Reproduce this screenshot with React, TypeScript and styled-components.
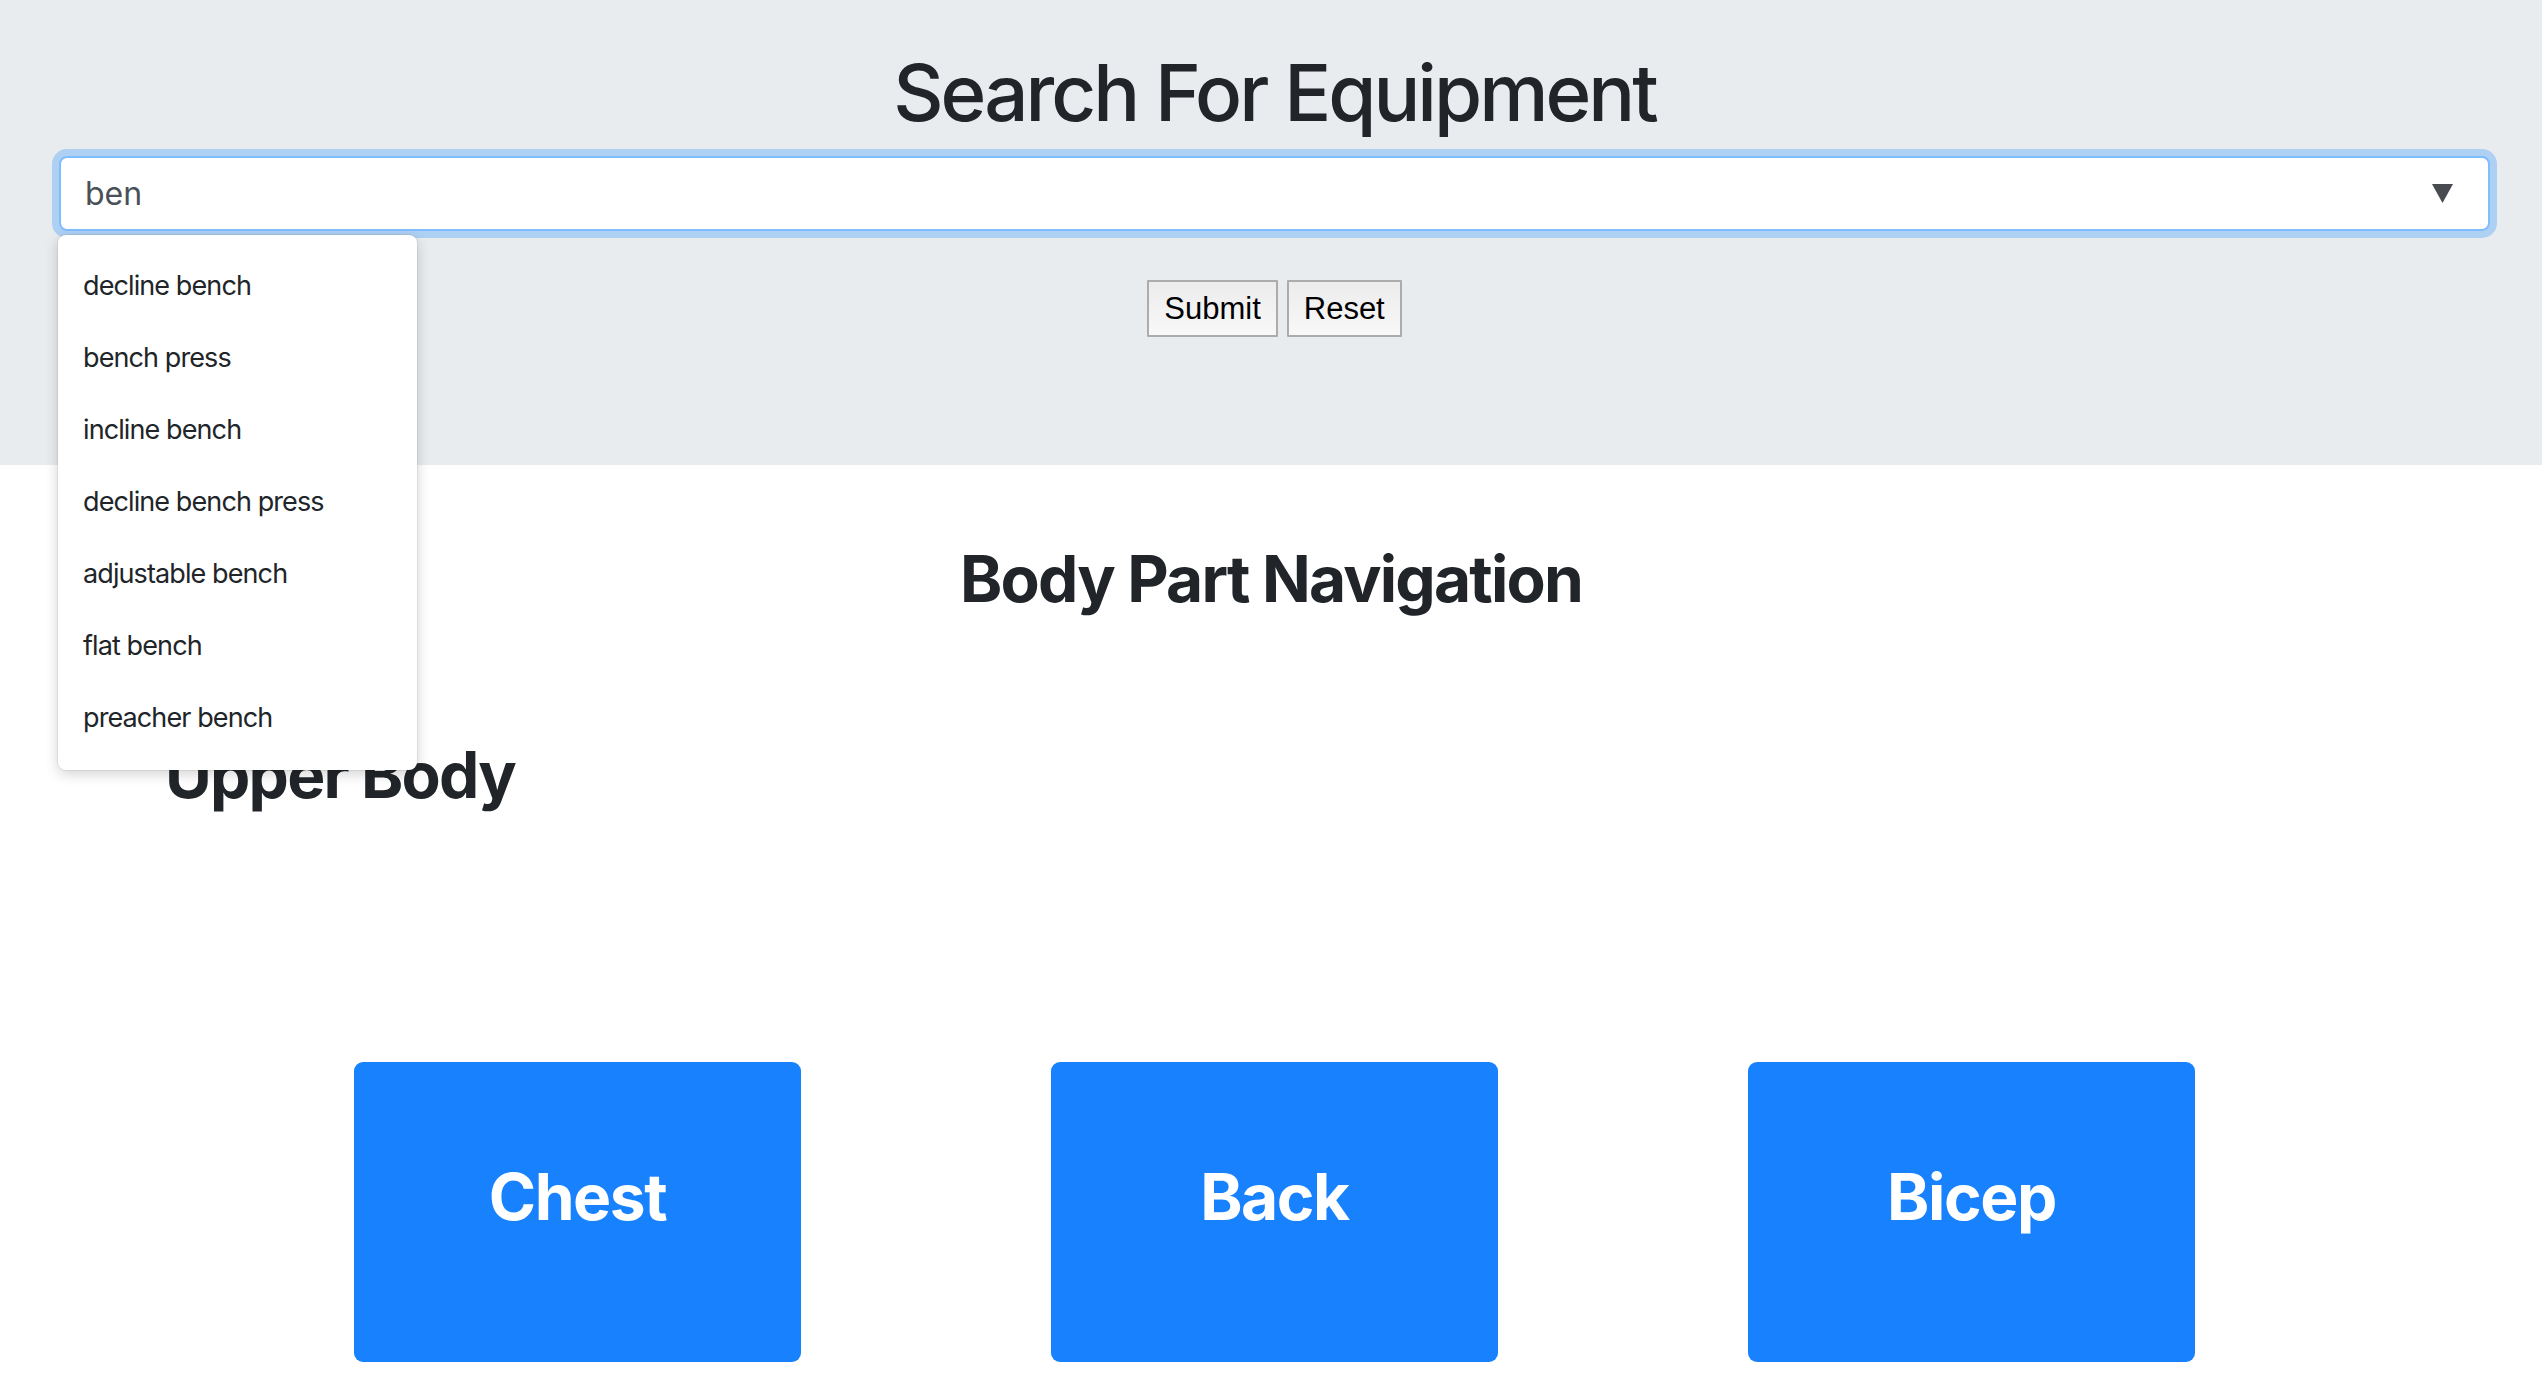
import React from 'react';
import styled, { createGlobalStyle } from 'styled-components';

const GlobalStyle = createGlobalStyle`
  body {
    margin: 0;
    background: #ffffff;
    font-family: Inter, "Noto Sans", "Liberation Sans", sans-serif;
    color: #212529;
  }
`;

// Header area with the search box
const Jumbotron = styled.header`
  background-color: #e9ecef;
  padding: 45px 52px 128px 59px;
`;

const Title = styled.h1`
  margin: 0 0 15px;
  font-size: 78px;
  font-weight: 500;
  line-height: 96px;
  letter-spacing: -3px;
  text-align: center;
  color: #212529;
`;

const SearchWrap = styled.div`
  position: relative;
`;

const SearchInput = styled.input`
  box-sizing: border-box;
  display: block;
  width: 100%;
  height: 75px;
  padding: 0 80px 0 24px;
  border: 2px solid #80bdff;
  border-radius: 8px;
  box-shadow: 0 0 0 7px rgba(0, 123, 255, 0.25);
  outline: none;
  background: #ffffff;
  font-family: inherit;
  font-size: 32px;
  color: #495057;
`;

const Caret = styled.svg`
  position: absolute;
  right: 37px;
  top: 28px;
  width: 21px;
  height: 19px;
`;

const Menu = styled.ul`
  position: absolute;
  top: calc(100% + 4px);
  left: -1px;
  z-index: 10;
  box-sizing: border-box;
  width: 359px;
  margin: 0;
  padding: 15px 0 16px;
  list-style: none;
  background: #ffffff;
  border-radius: 8px;
  box-shadow: 0 0 0 1px rgba(0, 0, 0, 0.06), 0 4px 14px rgba(0, 0, 0, 0.18);
`;

const MenuItem = styled.li`
  height: 72px;
  line-height: 72px;
  padding: 0 25px;
  font-size: 27px;
  letter-spacing: -0.9px;
  color: #212529;
  white-space: nowrap;
`;

const ButtonRow = styled.div`
  display: flex;
  justify-content: center;
  gap: 9px;
  margin-top: 49px;
`;

const FormButton = styled.button<{ $pad: number }>`
  height: 57px;
  padding: 0 ${(p) => p.$pad}px;
  border: 2px solid #acacac;
  border-radius: 1px;
  background: linear-gradient(#ececec, #f8f8f8);
  font-family: "Liberation Sans", Arial, sans-serif;
  font-size: 31px;
  color: #000000;
`;

// Body part section
const Section = styled.main`
  padding: 75px 0 0;
`;

const Heading = styled.h2<{ $align?: string }>`
  margin: 0;
  font-size: 64px;
  font-weight: 700;
  line-height: 77px;
  letter-spacing: -1.8px;
  text-align: ${(p) => p.$align || 'left'};
  color: #212529;
`;

const GroupTitle = styled(Heading)`
  margin-top: 119px;
  padding-left: 165px;
`;

const CardGrid = styled.div`
  display: grid;
  grid-template-columns: repeat(3, 697px);
  justify-content: center;
  padding-left: 7px;
  margin-top: 249px;
`;

const PartCard = styled.a`
  box-sizing: border-box;
  justify-self: center;
  width: 447px;
  height: 300px;
  padding-top: 96px;
  border-radius: 9px;
  background: #1881fe;
  color: #ffffff;
  text-align: center;
  text-decoration: none;
  font-size: 64px;
  font-weight: 700;
  line-height: 77px;
  letter-spacing: -1.4px;
`;

const suggestions = [
  'decline bench',
  'bench press',
  'incline bench',
  'decline bench press',
  'adjustable bench',
  'flat bench',
  'preacher bench',
];

const parts = ['Chest', 'Back', 'Bicep'];

const App = () => {
  return (
    <>
      <GlobalStyle />
      <Jumbotron>
        <Title>Search For Equipment</Title>
        <SearchWrap>
          <SearchInput defaultValue="ben" />
          <Caret viewBox="0 0 21 19">
            <path d="M0 0 H21 L10.5 19 Z" fill="#484b50" />
          </Caret>
          <Menu>
            {suggestions.map((s) => (
              <MenuItem key={s}>{s}</MenuItem>
            ))}
          </Menu>
        </SearchWrap>
        <ButtonRow>
          <FormButton $pad={15}>Submit</FormButton>
          <FormButton $pad={15}>Reset</FormButton>
        </ButtonRow>
      </Jumbotron>
      <Section>
        <Heading $align="center">Body Part Navigation</Heading>
        <GroupTitle>Upper Body</GroupTitle>
        <CardGrid>
          {parts.map((p) => (
            <PartCard key={p} href="#">
              {p}
            </PartCard>
          ))}
        </CardGrid>
      </Section>
    </>
  );
};

export default App;
